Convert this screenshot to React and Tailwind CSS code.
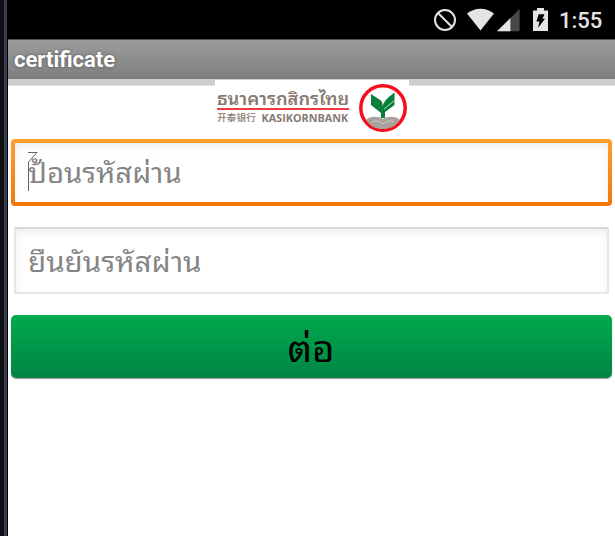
import React from 'react';

const thai = "font-['Noto_Sans_Thai_Looped','Noto_Looped_Thai','Droid_Sans_Thai','Loma','Waree','Garuda','Umpush','Noto_Sans',sans-serif]";

function StatusBar() {
  return (
    <div className="flex h-[39px] shrink-0 items-start bg-black text-[#e4e4e4]">
      <svg className="ml-[425px] mt-[8px] h-[24px] w-[24px] shrink-0" viewBox="0 0 24 24" fill="none" stroke="currentColor" strokeWidth="2">
        <circle cx="12" cy="12" r="10" />
        <path d="M5 5l14 14" />
      </svg>
      <svg className="ml-[9px] mt-[8px] h-[24px] w-[29px] shrink-0" viewBox="0 0 29 24" fill="currentColor">
        <path d="M1 5.5C9-.8 20-.8 28 5.5L14.5 22.5Z" />
      </svg>
      <svg className="ml-[1px] mt-[8px] h-[24px] w-[24px] shrink-0" viewBox="0 0 24 24">
        <path d="M1 23.2L23.6 1V23.2Z" fill="#484848" />
        <path d="M1 23.2L14.4 10V23.2Z" fill="currentColor" />
      </svg>
      <svg className="ml-[12px] mt-[7px] h-[24px] w-[17px] shrink-0" viewBox="0 0 17 24">
        <path d="M1 3.5H5V1H12V3.5H16V24H1Z" fill="currentColor" />
        <path d="M6.6 7.2H12.6L10.4 11.8H13L6.2 20.7L7.4 14.6H4.4Z" fill="#000" />
      </svg>
      <span className="ml-[10px] mt-[7px] whitespace-nowrap font-[Roboto,sans-serif] text-[22px] font-medium leading-[28px]">1:55</span>
    </div>
  );
}

function BankLogo() {
  return (
    <div className="relative z-10 -mt-[6px] flex h-[53px] w-[194px] shrink-0 self-center bg-white">
      <div className="ml-[2px] flex w-[132px] flex-col">
        <div className={`h-[28px] origin-left scale-x-[1.015] whitespace-nowrap text-[18px] font-semibold leading-[34px] text-[#877a72] ${thai}`}>ธนาคารกสิกรไทย</div>
        <div className="h-[2px] bg-[#f23a40]" />
        <div className="flex h-[16px] items-center justify-between whitespace-nowrap text-[#877a72]">
          <span className="origin-left scale-x-[1.08] font-['Noto_Sans_CJK_SC',sans-serif] text-[9px] font-medium">开泰银行</span>
          <span className="origin-right scale-x-[1.08] font-['Open_Sans',sans-serif] text-[10px] font-bold">KASIKORNBANK</span>
        </div>
      </div>
      <svg className="ml-[9px] mt-[3px] h-[50px] w-[50px]" viewBox="0 0 50 50">
        <circle cx="25" cy="25" r="22.2" fill="#fff" stroke="#f70d1b" strokeWidth="3.5" />
        <path d="M8 37C12 33 20 33 25 36C30 33 38 33 42 37C37 44 31 46 25 46C18 46 13 44 8 37Z" fill="#aaa19d" />
        <path d="M14 39Q20 36 25 41Q30 36 36 39" fill="none" stroke="#d0cbc8" />
        <path d="M13 11L23 17.5Q25 20 24.5 23Q26 17 36.5 9.5V22L27 29V35H23V30L13 22Z" fill="#087f3b" />
        <path d="M26 26L37 17" stroke="#ddeedc" strokeWidth=".8" />
      </svg>
    </div>
  );
}

export default function App() {
  return (
    <div className="flex h-[536px] w-[615px] overflow-hidden bg-white">
      <div className="w-[4px] shrink-0 bg-[#111113]" />
      <div className="w-[3px] shrink-0 bg-[#363c50]" />
      <div className="w-px shrink-0 bg-black" />
      <main className="flex w-[607px] shrink-0 flex-col">
        <StatusBar />
        <header className="h-[40px] shrink-0 border-t border-[#555] bg-linear-to-b from-[#9c9c9c] to-[#7e7e7e] pl-[6px] font-[Roboto,sans-serif] text-[22px] font-bold leading-[39px] text-white [text-shadow:0_0_3px_#555]">certificate</header>
        <div className="h-[7px] shrink-0 bg-linear-to-b from-[#cecece] from-85% to-[#eeeeee]" />
        <BankLogo />
        <div className="ml-[3px] mt-[6px] h-[67px] w-[601px] shrink-0 rounded-[4px] bg-linear-to-b from-[#ff9f2d] to-[#f07808] p-[4px]">
          <div className={`relative h-full bg-white pl-[13px] text-[28px] leading-[56px] text-[#858585] shadow-[inset_0_4px_8px_#eeeeee] ${thai}`}>
            <span className="inline-block origin-left scale-x-[1.045]">ป้อนรหัสผ่าน</span>
            <svg className="absolute left-[12px] top-[9px] h-[40px] w-[12px]" viewBox="0 0 12 40" fill="none" stroke="#666">
              <path d="M1 .5H10L1.5 10V39" />
            </svg>
          </div>
        </div>
        <div className={`ml-[6px] mt-[21px] h-[67px] w-[595px] shrink-0 border-2 border-[#e7e7e7] border-t-[#d8d8d8] bg-white pl-[12px] text-[28px] leading-[61px] text-[#858585] shadow-[inset_0_4px_8px_#eeeeee] ${thai}`}>
          <span className="inline-block origin-left scale-x-[1.055]">ยืนยันรหัสผ่าน</span>
        </div>
        <button className={`ml-[3px] mt-[21px] h-[63px] w-[601px] shrink-0 rounded-[5px] bg-linear-to-b from-[#00aa4d] to-[#008544] text-center text-[36px] leading-[63px] text-black shadow-[0_1px_1px_#999] ${thai}`}>
          <span className="inline-block scale-x-[1.07]">ต่อ</span>
        </button>
      </main>
    </div>
  );
}
